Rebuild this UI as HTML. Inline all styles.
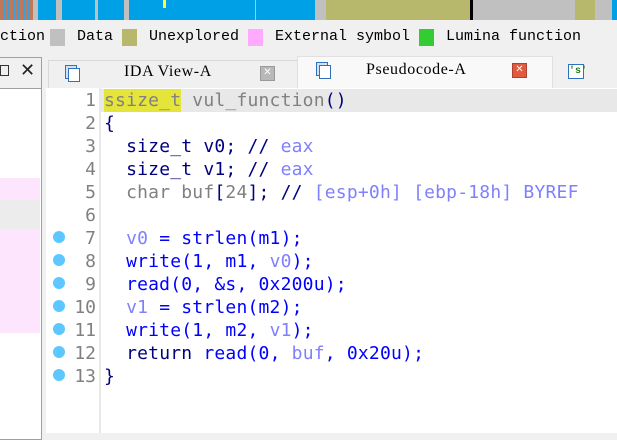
<!DOCTYPE html><html><head><style>
body{margin:0;width:617px;height:433px;overflow:hidden;background:#f0f0f0;position:relative;font-family:"Liberation Mono",monospace}
.a{position:absolute}
.strip div{position:absolute;top:0;height:20px}
.lg{position:absolute;top:28px;font-size:15px;color:#000;white-space:pre}
.sw{position:absolute;top:29px;width:15px;height:17px}
.code{position:absolute;left:104px;top:89px;font-family:"DejaVu Sans Mono",monospace;font-size:18px;line-height:23px;letter-spacing:0.2px;white-space:pre;color:#0000ff}
.ln{position:absolute;left:56px;top:89px;width:40px;text-align:right;font-family:"DejaVu Sans Mono",monospace;font-size:18px;line-height:23px;color:#808080;white-space:pre}
.k{color:#000080}.v{color:#8080ff}.g{color:#808080}.c{color:#8080ff}
.dot{position:absolute;left:53px;width:12px;height:12px;border-radius:50%;background:#5cc8ff}
</style></head><body>
<div class="strip">
<div style="left:0;width:33px;background:repeating-linear-gradient(90deg,#c0785a 0 3px,#3d9fd6 3px 5px)"></div>
<div style="left:33px;width:5px;background:#c0c0c0"></div>
<div style="left:38px;width:277px;background:#00a0e6"></div>
<div style="left:56px;width:6px;background:#c0c0c0"></div>
<div style="left:95px;width:3px;background:#c0c0c0"></div>
<div style="left:124px;width:5px;background:#c0c0c0"></div>
<div style="left:255px;width:1px;background:#c0c0c0"></div>
<div style="left:163px;width:3px;height:8px;background:#ffff40"></div>
<div style="left:315px;width:11px;background:#c0c0c0"></div>
<div style="left:326px;width:144px;background:#b8b86c"></div>
<div style="left:470px;width:3px;background:#000"></div>
<div style="left:473px;width:102px;background:#c0c0c0"></div>
<div style="left:575px;width:20px;background:#b8b86c"></div>
<div style="left:595px;width:17px;background:#c0c0c0"></div>
<div style="left:612px;width:5px;background:#00a0e6"></div>
</div>
<div class="lg" style="left:0">ction</div>
<div class="sw" style="left:50px;background:#c0c0c0"></div><div class="lg" style="left:77px">Data</div>
<div class="sw" style="left:122px;background:#b8b86c"></div><div class="lg" style="left:149px">Unexplored</div>
<div class="sw" style="left:248px;background:#ffaaff"></div><div class="lg" style="left:275px">External symbol</div>
<div class="sw" style="left:419px;background:#33cc33"></div><div class="lg" style="left:446px">Lumina function</div>
<div class="a" style="left:-1px;top:57px;width:41px;height:30px;border:1px solid #a0a0a0;background:#f0f0f0"></div>
<div class="a" style="left:0;top:65px;width:7px;height:9px;border:1px solid #333"></div>
<div class="a" style="left:20px;top:60px;font-size:18px;font-weight:bold;color:#222;font-family:'DejaVu Sans'">✕</div>
<div class="a" style="left:-1px;top:88px;width:41px;height:350px;border:1px solid #a0a0a0;background:#fff"></div>
<div class="a" style="left:0;top:178px;width:40px;height:22px;background:#fde6fd"></div>
<div class="a" style="left:0;top:200px;width:40px;height:29px;background:#ececec"></div>
<div class="a" style="left:0;top:229px;width:40px;height:104px;background:#fde6fd"></div>
<div class="a" style="left:48px;top:60px;width:248px;height:28px;border:1px solid #d8d8d8;background:#f0f0f0"></div>
<div class="a" style="left:65px;top:65px;width:10px;height:12px;border:1px solid #3070c0;background:#cfe2f8"></div>
<div class="a" style="left:68px;top:68px;width:10px;height:12px;border:1px solid #3070c0;background:#fff"></div>
<div class="a" style="left:124px;top:63px;font-size:16px;font-family:'Liberation Serif',serif;letter-spacing:0.6px">IDA View-A</div>
<div class="a" style="left:260px;top:66px;width:13px;height:13px;background:#b8b8b8;border:1px solid #999;color:#fff;font-size:10px;line-height:13px;text-align:center">✕</div>
<div class="a" style="left:297px;top:56px;width:254px;height:33px;background:#f9f9f9;border:1px solid #e0e0e0;border-bottom:none"></div>
<div class="a" style="left:316px;top:62px;width:10px;height:12px;border:1px solid #3070c0;background:#cfe2f8"></div>
<div class="a" style="left:319px;top:65px;width:10px;height:12px;border:1px solid #3070c0;background:#fff"></div>
<div class="a" style="left:366px;top:61px;font-size:16px;font-family:'Liberation Serif',serif;letter-spacing:0.6px">Pseudocode-A</div>
<div class="a" style="left:512px;top:63px;width:13px;height:13px;background:#e05a40;border:1px solid #b04030;color:#fff;font-size:10px;line-height:13px;text-align:center">✕</div>
<div class="a" style="left:568px;top:64px;width:14px;height:13px;border:1px solid #3070c0;background:#fff;color:#208020;font-size:10px;font-weight:bold;line-height:13px;text-align:center">'s'</div>
<div class="a" style="left:46px;top:88px;width:571px;height:345px;background:#fff"></div>
<div class="a" style="left:99px;top:88px;width:2px;height:345px;background:#e8e8e8"></div>
<div class="a" style="left:101px;top:89px;width:516px;height:23px;background:#e8e8e8"></div>
<div class="a" style="left:104px;top:89px;width:77px;height:23px;background:#e4e43a"></div>
<div class="ln">1
2
3
4
5
6
7
8
9
10
11
12
13</div>
<div class="dot" style="top:231px"></div><div class="dot" style="top:254px"></div><div class="dot" style="top:277px"></div><div class="dot" style="top:300px"></div><div class="dot" style="top:323px"></div><div class="dot" style="top:346px"></div><div class="dot" style="top:369px"></div>
<div class="code"><span class="g">ssize_t vul_function</span><span class="k">()</span>
<span class="k">{</span>
  <span class="k">size_t v0; //</span> <span class="c">eax</span>
  <span class="k">size_t v1; //</span> <span class="c">eax</span>
  <span class="g">char buf</span><span class="k">[</span><span class="g">24</span><span class="k">]; //</span> <span class="c">[esp+0h] [ebp-18h] BYREF</span>

  <span class="v">v0</span> = strlen(m1);
  write(1, m1, <span class="v">v0</span>);
  read(0, &amp;s, 0x200u);
  <span class="v">v1</span> = strlen(m2);
  write(1, m2, <span class="v">v1</span>);
  <span class="k">return</span> read(0, <span class="v">buf</span>, 0x20u);
<span class="k">}</span></div>
</body></html>
